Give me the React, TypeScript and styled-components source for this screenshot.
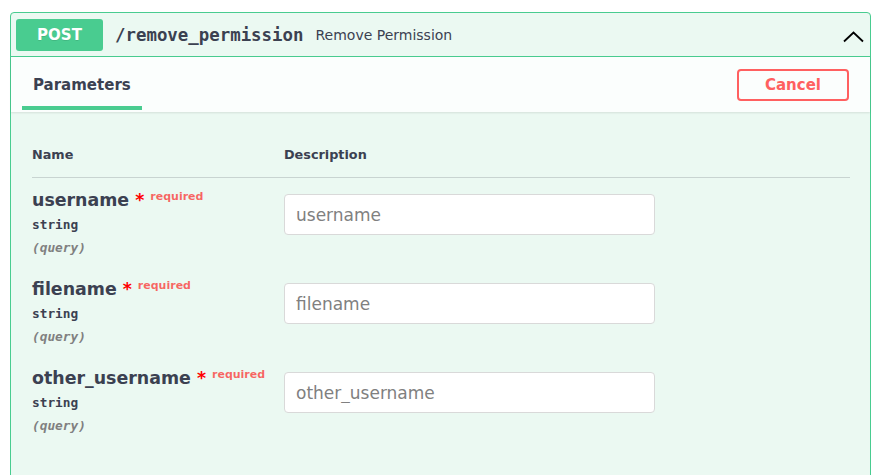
import styled, { createGlobalStyle } from 'styled-components';

const GlobalStyle = createGlobalStyle`
  html, body {
    margin: 0;
    padding: 0;
    background: #fff;
    overflow: hidden;
  }
  * {
    box-sizing: border-box;
  }
`;

const sans = `"DejaVu Sans", "Liberation Sans", sans-serif`;
const mono = `"DejaVu Sans Mono", "Liberation Mono", monospace`;

const Page = styled.div`
  padding: 12px 20px 0 10px;
  font-family: ${sans};
  color: #3b4151;
`;

const OpBlock = styled.div`
  border: 1px solid #49cc90;
  border-radius: 4px;
  background: #ebf9f2;
`;

const Summary = styled.div`
  display: flex;
  align-items: center;
  height: 44px;
  padding: 6px 6px 5px 5px;
  border-bottom: 1px solid #49cc90;
`;

const Method = styled.span`
  min-width: 87px;
  height: 32px;
  display: flex;
  align-items: center;
  justify-content: center;
  border-radius: 3px;
  background: #49cc90;
  color: #fff;
  font-size: 15px;
  font-weight: 700;
  text-shadow: 0 1px 0 rgba(0, 0, 0, 0.1);
`;

const Path = styled.span`
  margin-left: 12px;
  font-family: ${mono};
  font-size: 17.4px;
  font-weight: 700;
  color: #3b4151;
`;

const Summ = styled.span`
  margin-left: 12px;
  font-size: 14px;
  color: #3b4151;
  flex: 1;
`;

const Chevron = styled.svg`
  width: 21px;
  height: 12px;
  margin-top: 3px;
`;

const SectionHeader = styled.div`
  display: flex;
  align-items: center;
  justify-content: space-between;
  height: 55px;
  padding: 0 21px 0 22px;
  background: rgba(255, 255, 255, 0.8);
  box-shadow: 0 1px 2px rgba(0, 0, 0, 0.1);
  position: relative;
`;

const TabTitle = styled.h4`
  margin: 0;
  position: relative;
  font-size: 15px;
  line-height: 20px;
  font-weight: 700;
  color: #3b4151;

  &::after {
    content: '';
    position: absolute;
    left: -11px;
    top: 31px;
    width: 120px;
    height: 4px;
    background: #49cc90;
  }
`;

const CancelButton = styled.button`
  width: 112px;
  height: 32px;
  border: 2px solid #ff6060;
  border-radius: 4px;
  background: transparent;
  color: #ff6060;
  font-family: ${sans};
  font-size: 15px;
  font-weight: 700;
  padding: 0;
`;

const Body = styled.div`
  padding: 35px 20px 40px 21px;
`;

const HeadRow = styled.div`
  display: grid;
  grid-template-columns: 252px 1fr;
  padding-bottom: 14px;
  border-bottom: 1px solid rgba(59, 65, 81, 0.2);
  font-size: 12.8px;
  line-height: 16px;
  font-weight: 700;
`;

const ParamRow = styled.div`
  display: grid;
  grid-template-columns: 252px 1fr;
  padding: 11px 0 9px;
`;

const NameCell = styled.div`
  display: flex;
  flex-direction: column;
  padding-top: 1px;
`;

const ParamName = styled.div`
  height: 20px;
  font-size: 17.4px;
  line-height: 20px;
  font-weight: 700;
  white-space: nowrap;
`;

const Star = styled.span`
  color: red;
`;

const Required = styled.span`
  position: relative;
  top: -6px;
  padding: 0 5px 0 6px;
  font-size: 11px;
  line-height: 1;
  font-weight: 700;
  color: rgba(255, 0, 0, 0.6);
`;

const ParamType = styled.div`
  margin-top: 5px;
  font-family: ${mono};
  font-size: 12.8px;
  line-height: 20px;
  font-weight: 700;
`;

const ParamIn = styled.div`
  margin-top: 3px;
  font-family: ${mono};
  font-size: 12.8px;
  line-height: 20px;
  font-weight: 700;
  font-style: italic;
  color: #808080;
`;

const TextInput = styled.input`
  width: 371px;
  height: 41px;
  margin-top: 5px;
  padding: 0 11px;
  border: 1px solid #d9d9d9;
  border-radius: 4px;
  background: #fff;
  font-family: ${sans};
  font-size: 17px;
  color: #3b4151;
  outline: none;

  &::placeholder {
    color: #808080;
  }
`;

const params = ['username', 'filename', 'other_username'];

export default function App() {
  return (
    <>
      <GlobalStyle />
      <Page>
        <OpBlock>
          <Summary>
            <Method>POST</Method>
            <Path>/remove_permission</Path>
            <Summ>Remove Permission</Summ>
            <Chevron viewBox="0 0 21 12">
              <path d="M1 10.5 L10.5 1.5 L20 10.5" fill="none" stroke="#000" strokeWidth="1.8" />
            </Chevron>
          </Summary>
          <SectionHeader>
            <TabTitle>Parameters</TabTitle>
            <CancelButton>Cancel</CancelButton>
          </SectionHeader>
          <Body>
            <HeadRow>
              <div>Name</div>
              <div>Description</div>
            </HeadRow>
            {params.map((p) => (
              <ParamRow key={p}>
                <NameCell>
                  <ParamName>
                    {p}
                    <Star>&nbsp;*</Star>
                    <Required>required</Required>
                  </ParamName>
                  <ParamType>string</ParamType>
                  <ParamIn>(query)</ParamIn>
                </NameCell>
                <div>
                  <TextInput type="text" placeholder={p} />
                </div>
              </ParamRow>
            ))}
          </Body>
        </OpBlock>
      </Page>
    </>
  );
}
